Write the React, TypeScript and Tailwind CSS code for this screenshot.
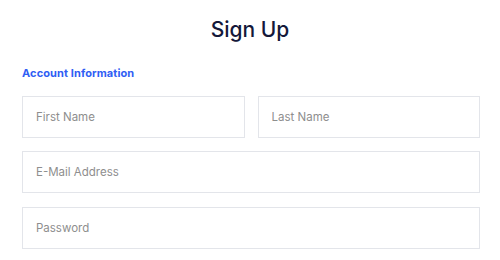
import React from "react";

function Field({ placeholder, type = "text", className = "" }: { placeholder: string; type?: string; className?: string }) {
  return (
    <input
      type={type}
      placeholder={placeholder}
      className={
        "h-[42px] min-w-0 border border-[#e3e5ea] bg-white px-[13px] text-[11.5px] text-[#333] placeholder:text-[#8e8e8e] outline-none " +
        className
      }
    />
  );
}

export default function App() {
  return (
    <div className="w-[500px] h-[260px] bg-white font-['Inter',sans-serif] px-[22px] pt-[16px] box-border overflow-hidden">
      <h1 className="text-center text-[21px] leading-[28px] font-medium text-[#14183a]">Sign Up</h1>
      <div className="mt-[21px] text-[11px] leading-[16px] font-bold text-[#2f5ef4] tracking-[0.1px]">
        Account Information
      </div>
      <form className="mt-[15px] flex flex-col w-[458px]">
        <div className="flex gap-[13px]">
          <Field placeholder="First Name" className="flex-1" />
          <Field placeholder="Last Name" className="flex-1" />
        </div>
        <Field placeholder="E-Mail Address" type="email" className="w-full mt-[13px]" />
        <Field placeholder="Password" type="password" className="w-full mt-[14px]" />
      </form>
    </div>
  );
}
